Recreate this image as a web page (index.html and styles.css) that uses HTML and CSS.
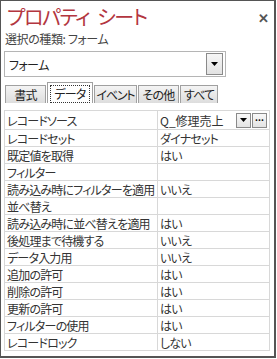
FILE: index.html
```html
<!DOCTYPE html>
<html lang="ja">
<head>
    <meta charset="UTF-8">
    <meta name="viewport" content="width=device-width, initial-scale=1.0">
    <title>プロパティ シート</title>
    <link rel="stylesheet" href="styles.css">
</head>
<body>
  <div class="sheet">
    <header class="sheet-head">
      <h1>プロパティ シート</h1>
      <span class="close">✕</span>
    </header>
    <p class="sel-type">選択の種類: フォーム</p>

    <div class="combo">
      <span class="combo-text">フォーム</span>
      <span class="combo-btn"><svg width="7" height="4" viewBox="0 0 7 4"><path d="M0 0h7L3.5 4z" fill="#000"/></svg></span>
    </div>

    <div class="tabs">
      <span class="tab t1">書式</span>
      <span class="tab t2 active"><span class="focus">データ</span></span>
      <span class="tab t3">イベント</span>
      <span class="tab t4">その他</span>
      <span class="tab t5">すべて</span>
    </div>

    <table class="props">
      <tr class="first">
        <td class="name">レコードソース</td>
        <td class="val">
          <div class="val-row">
            <span>Q_修理売上</span>
            <span class="mini-btns">
              <span class="mini"><svg width="7" height="4" viewBox="0 0 7 4"><path d="M0 0h7L3.5 4z" fill="#000"/></svg></span>
              <span class="mini dots">...</span>
            </span>
          </div>
        </td>
      </tr>
      <tr><td class="name">レコードセット</td><td class="val">ダイナセット</td></tr>
      <tr><td class="name">既定値を取得</td><td class="val">はい</td></tr>
      <tr><td class="name">フィルター</td><td class="val"></td></tr>
      <tr><td class="name">読み込み時にフィルターを適用</td><td class="val">いいえ</td></tr>
      <tr><td class="name">並べ替え</td><td class="val"></td></tr>
      <tr><td class="name">読み込み時に並べ替えを適用</td><td class="val">はい</td></tr>
      <tr><td class="name">後処理まで待機する</td><td class="val">いいえ</td></tr>
      <tr><td class="name">データ入力用</td><td class="val">いいえ</td></tr>
      <tr><td class="name">追加の許可</td><td class="val">はい</td></tr>
      <tr><td class="name">削除の許可</td><td class="val">はい</td></tr>
      <tr><td class="name">更新の許可</td><td class="val">はい</td></tr>
      <tr><td class="name">フィルターの使用</td><td class="val">はい</td></tr>
      <tr><td class="name">レコードロック</td><td class="val">しない</td></tr>
    </table>
  </div>
</body>
</html>
```

FILE: styles.css
```css
/* ウィンドウ全体 */
html, body {
  margin: 0;
  padding: 0;
  background: #ffffff;
  font-family: "Noto Sans CJK JP", "Noto Sans", sans-serif;
  font-feature-settings: "palt";
  color: #333333;
}

.sheet {
  box-sizing: border-box;
  width: 276px;
  height: 358px;
  border: 1px solid #555555;
  border-right-width: 2px;
  border-bottom-width: 2px;
  padding: 5px 4px 0 3px;
  overflow: hidden;
}

/* タイトル */
.sheet-head {
  display: flex;
  justify-content: space-between;
  align-items: flex-start;
}

h1 {
  margin: 0 0 0 3px;
  font-size: 20px;
  font-weight: normal;
  line-height: 22px;
  letter-spacing: -1.4px;
  word-spacing: 5px;
  color: #b3363f;
}

.close {
  font-size: 13px;
  font-weight: bold;
  color: #555555;
  margin: 2px 1px 0 0;
}

.sel-type {
  margin: 4px 0 0 1px;
  font-size: 12px;
  line-height: 14px;
  letter-spacing: -0.4px;
  color: #444444;
}

/* コンボボックス */
.combo {
  box-sizing: border-box;
  width: 222px;
  height: 26px;
  margin-top: 5px;
  border: 1px solid #b5b5b5;
  display: flex;
  align-items: center;
  justify-content: space-between;
  padding: 0 2px 0 4px;
  font-size: 12px;
  letter-spacing: -0.6px;
  color: #222222;
}

.combo-btn {
  box-sizing: border-box;
  width: 17px;
  height: 22px;
  border: 1px solid #8a8a8a;
  background: linear-gradient(#f6f6f6, #e2e2e2);
  display: flex;
  align-items: center;
  justify-content: center;
}

/* タブ */
.tabs {
  display: flex;
  align-items: flex-end;
  gap: 1px;
  margin-top: 5px;
  padding-left: 1px;
}

.tab {
  box-sizing: border-box;
  height: 18px;
  border: 1px solid #a0a0a0;
  border-bottom: none;
  background: linear-gradient(#f4f4f4, #dddddd);
  font-size: 12px;
  line-height: 17px;
  letter-spacing: -0.8px;
  text-align: center;
  white-space: nowrap;
  color: #222222;
}

.t1 { width: 41px; }
.t2 { width: 46px; }
.t3 { width: 43px; letter-spacing: -1.2px; }
.t4 { width: 41px; }
.t5 { width: 38px; }

.tab.active {
  height: 21px;
  padding: 2px 2px 0;
  background: #ffffff;
}

.tab .focus {
  display: block;
  border: 1px dotted #333333;
  line-height: 16px;
}

/* プロパティ一覧 */
.props {
  width: 266px;
  margin-top: 7px;
  border-collapse: collapse;
  border: 1px solid #9a9a9a;
  font-size: 12px;
  letter-spacing: -0.8px;
  color: #333333;
}

.props td {
  border: 1px solid #d8d8d8;
  height: 16px;
  padding: 0 2px;
  line-height: 15px;
  white-space: nowrap;
}

.props .name {
  width: 148px;
}

.props .first td {
  height: 18px;
}

.val-row {
  display: flex;
  justify-content: space-between;
  align-items: center;
  letter-spacing: 0;
}

.mini-btns {
  display: flex;
  gap: 1px;
}

.mini {
  box-sizing: border-box;
  width: 15px;
  height: 15px;
  border: 1px solid #8a8a8a;
  background: linear-gradient(#f8f8f8, #e4e4e4);
  display: flex;
  align-items: center;
  justify-content: center;
}

.mini.dots {
  font-size: 9px;
  font-weight: bold;
  line-height: 8px;
  align-items: flex-start;
  color: #000000;
}
```
